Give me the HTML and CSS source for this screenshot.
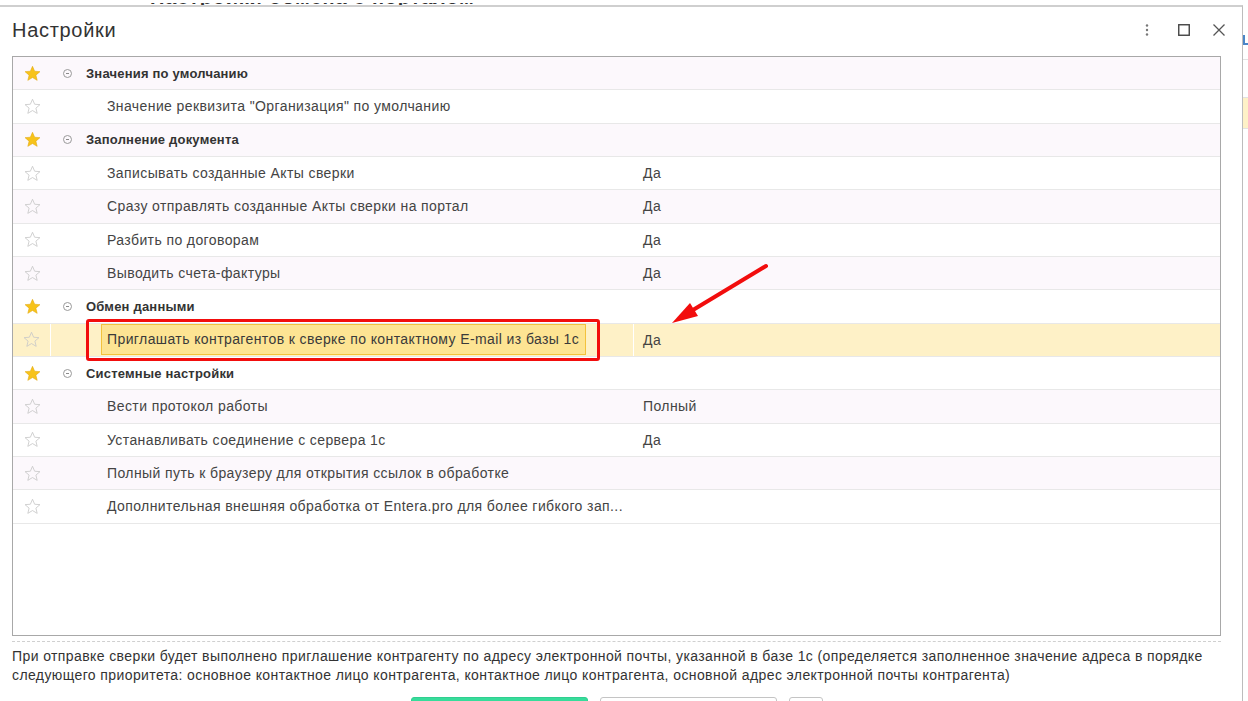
FILE: index.html
```html
<!DOCTYPE html>
<html lang="ru">
<head>
    <meta charset="UTF-8">
    <meta name="viewport" content="width=device-width, initial-scale=1.0">
    <title>Настройки</title>
    <link rel="stylesheet" href="styles.css">
</head>
<body>

<div class="screen">
    <div class="main">
        <!-- kusok okna pod dialogom -->
        <div class="backdrop-top"><div class="backdrop-clip"><span>Настройки обмена с порталом</span></div></div>

        <div class="dialog">
            <div class="dialog-header">
                <h1>Настройки</h1>
                <div class="header-tools">
                    <svg class="tool-dots" width="4" height="12" viewBox="0 0 4 12"><circle cx="2" cy="1.5" r="1.2"/><circle cx="2" cy="6" r="1.2"/><circle cx="2" cy="10.5" r="1.2"/></svg>
                    <svg class="tool-max" width="12" height="12" viewBox="0 0 12 12"><rect x="0.75" y="0.75" width="10.5" height="10.5"/></svg>
                    <svg class="tool-close" width="12" height="12" viewBox="0 0 12 12"><path d="M0.5 0.5L11.5 11.5M11.5 0.5L0.5 11.5"/></svg>
                </div>
            </div>

            <div class="settings-table">
                <div class="row group">
                    <div class="cell star"><svg class="star-on" width="17" height="17" viewBox="0 0 24 24"><path d="M12 1.8l3 7 7.5.6-5.7 4.9 1.8 7.4L12 17.7l-6.6 4 1.8-7.4L1.5 9.4 9 8.8z"/></svg></div>
                    <div class="cell label"><span class="collapse"></span>Значения по умолчанию</div>
                    <div class="cell value"></div>
                </div>
                <div class="row">
                    <div class="cell star"><svg class="star-off" width="17" height="17" viewBox="0 0 24 24"><path d="M12 1.8l3 7 7.5.6-5.7 4.9 1.8 7.4L12 17.7l-6.6 4 1.8-7.4L1.5 9.4 9 8.8z"/></svg></div>
                    <div class="cell label">Значение реквизита "Организация" по умолчанию</div>
                    <div class="cell value"></div>
                </div>
                <div class="row group">
                    <div class="cell star"><svg class="star-on" width="17" height="17" viewBox="0 0 24 24"><path d="M12 1.8l3 7 7.5.6-5.7 4.9 1.8 7.4L12 17.7l-6.6 4 1.8-7.4L1.5 9.4 9 8.8z"/></svg></div>
                    <div class="cell label"><span class="collapse"></span>Заполнение документа</div>
                    <div class="cell value"></div>
                </div>
                <div class="row">
                    <div class="cell star"><svg class="star-off" width="17" height="17" viewBox="0 0 24 24"><path d="M12 1.8l3 7 7.5.6-5.7 4.9 1.8 7.4L12 17.7l-6.6 4 1.8-7.4L1.5 9.4 9 8.8z"/></svg></div>
                    <div class="cell label">Записывать созданные Акты сверки</div>
                    <div class="cell value">Да</div>
                </div>
                <div class="row">
                    <div class="cell star"><svg class="star-off" width="17" height="17" viewBox="0 0 24 24"><path d="M12 1.8l3 7 7.5.6-5.7 4.9 1.8 7.4L12 17.7l-6.6 4 1.8-7.4L1.5 9.4 9 8.8z"/></svg></div>
                    <div class="cell label">Сразу отправлять созданные Акты сверки на портал</div>
                    <div class="cell value">Да</div>
                </div>
                <div class="row">
                    <div class="cell star"><svg class="star-off" width="17" height="17" viewBox="0 0 24 24"><path d="M12 1.8l3 7 7.5.6-5.7 4.9 1.8 7.4L12 17.7l-6.6 4 1.8-7.4L1.5 9.4 9 8.8z"/></svg></div>
                    <div class="cell label">Разбить по договорам</div>
                    <div class="cell value">Да</div>
                </div>
                <div class="row">
                    <div class="cell star"><svg class="star-off" width="17" height="17" viewBox="0 0 24 24"><path d="M12 1.8l3 7 7.5.6-5.7 4.9 1.8 7.4L12 17.7l-6.6 4 1.8-7.4L1.5 9.4 9 8.8z"/></svg></div>
                    <div class="cell label">Выводить счета-фактуры</div>
                    <div class="cell value">Да</div>
                </div>
                <div class="row group">
                    <div class="cell star"><svg class="star-on" width="17" height="17" viewBox="0 0 24 24"><path d="M12 1.8l3 7 7.5.6-5.7 4.9 1.8 7.4L12 17.7l-6.6 4 1.8-7.4L1.5 9.4 9 8.8z"/></svg></div>
                    <div class="cell label"><span class="collapse"></span>Обмен данными</div>
                    <div class="cell value"></div>
                </div>
                <div class="row selected">
                    <div class="cell star"><svg class="star-off" width="17" height="17" viewBox="0 0 24 24"><path d="M12 1.8l3 7 7.5.6-5.7 4.9 1.8 7.4L12 17.7l-6.6 4 1.8-7.4L1.5 9.4 9 8.8z"/></svg></div>
                    <div class="cell label">
                        <span class="edit-box">Приглашать контрагентов к сверке по контактному E-mail из базы 1с</span>
                        <span class="red-frame"></span>
                    </div>
                    <div class="cell value">Да</div>
                </div>
                <div class="row group">
                    <div class="cell star"><svg class="star-on" width="17" height="17" viewBox="0 0 24 24"><path d="M12 1.8l3 7 7.5.6-5.7 4.9 1.8 7.4L12 17.7l-6.6 4 1.8-7.4L1.5 9.4 9 8.8z"/></svg></div>
                    <div class="cell label"><span class="collapse"></span>Системные настройки</div>
                    <div class="cell value"></div>
                </div>
                <div class="row">
                    <div class="cell star"><svg class="star-off" width="17" height="17" viewBox="0 0 24 24"><path d="M12 1.8l3 7 7.5.6-5.7 4.9 1.8 7.4L12 17.7l-6.6 4 1.8-7.4L1.5 9.4 9 8.8z"/></svg></div>
                    <div class="cell label">Вести протокол работы</div>
                    <div class="cell value">Полный</div>
                </div>
                <div class="row">
                    <div class="cell star"><svg class="star-off" width="17" height="17" viewBox="0 0 24 24"><path d="M12 1.8l3 7 7.5.6-5.7 4.9 1.8 7.4L12 17.7l-6.6 4 1.8-7.4L1.5 9.4 9 8.8z"/></svg></div>
                    <div class="cell label">Устанавливать соединение с сервера 1с</div>
                    <div class="cell value">Да</div>
                </div>
                <div class="row">
                    <div class="cell star"><svg class="star-off" width="17" height="17" viewBox="0 0 24 24"><path d="M12 1.8l3 7 7.5.6-5.7 4.9 1.8 7.4L12 17.7l-6.6 4 1.8-7.4L1.5 9.4 9 8.8z"/></svg></div>
                    <div class="cell label">Полный путь к браузеру для открытия ссылок в обработке</div>
                    <div class="cell value"></div>
                </div>
                <div class="row">
                    <div class="cell star"><svg class="star-off" width="17" height="17" viewBox="0 0 24 24"><path d="M12 1.8l3 7 7.5.6-5.7 4.9 1.8 7.4L12 17.7l-6.6 4 1.8-7.4L1.5 9.4 9 8.8z"/></svg></div>
                    <div class="cell label">Дополнительная внешняя обработка от Entera.pro для более гибкого зап...</div>
                    <div class="cell value"></div>
                </div>
            </div>

            <div class="hint">
                При отправке сверки будет выполнено приглашение контрагенту по адресу электронной почты, указанной в базе 1с (определяется заполненное значение адреса в порядке<br>
                следующего приоритета: основное контактное лицо контрагента, контактное лицо контрагента, основной адрес электронной почты контрагента)
            </div>

            <div class="buttons">
                <button type="button" class="btn btn-primary">Записать и закрыть</button>
                <button type="button" class="btn">Записать</button>
                <button type="button" class="btn btn-small">?</button>
            </div>
        </div>
    </div>

    <div class="side">
        <div class="side-icon"></div>
        <div class="side-row side-first"></div>
        <div class="side-row side-yellow"></div>
        <div class="side-row"></div>
    </div>
</div>

<!-- strelka-podskazka poverh vsego -->
<svg class="arrow" width="1248" height="701" viewBox="0 0 1248 701">
    <line x1="766" y1="266" x2="688" y2="313"/>
    <polygon points="672,323 698,316 690,303"/>
</svg>

</body>
</html>
```

FILE: styles.css
```css
body {
    margin: 0;
    padding: 0;
    font-family: 'Liberation Sans', Arial, sans-serif;
    font-size: 14px;
    letter-spacing: 0.4px;
    color: #444;
    background-color: #fff;
    position: relative;
    width: 1248px;
    height: 701px;
    overflow: hidden;
}
.screen {
    display: flex;
    height: 701px;
}
.main {
    width: 1243px;
    display: flex;
    flex-direction: column;
    min-height: 0;
}
.backdrop-top {
    height: 5px;
    flex-shrink: 0;
    box-sizing: border-box;
    padding: 3px 0 0 150px;
    overflow: hidden;
}
.backdrop-clip {
    height: 2px;
    overflow: hidden;
}
.backdrop-clip span {
    display: block;
    margin-top: -16px;
    font-size: 20px;
    line-height: 20px;
    font-weight: bold;
    letter-spacing: 0.8px;
    color: #333;
    white-space: nowrap;
}
.dialog {
    flex: 1;
    min-height: 0;
    overflow: hidden;
    background-color: #fff;
    border-top: 2px solid #cfcfcf;
    border-right: 1px solid #bcbcbc;
    display: flex;
    flex-direction: column;
}
.dialog > * {
    flex-shrink: 0;
}
.dialog-header {
    height: 49px;
    box-sizing: border-box;
    padding: 12px 17px 0 12px;
    display: flex;
    justify-content: space-between;
    align-items: flex-start;
}
.dialog-header h1 {
    margin: 0;
    font-size: 20px;
    line-height: 23px;
    letter-spacing: 0.7px;
    font-weight: normal;
    color: #333;
}
.header-tools {
    display: flex;
    align-items: center;
    padding-top: 5px;
}
.tool-dots {
    fill: #777;
    margin-right: 29px;
}
.tool-max {
    fill: none;
    stroke: #444;
    stroke-width: 1.4;
    margin-right: 23px;
}
.tool-close {
    stroke: #555;
    stroke-width: 1.3;
}
.settings-table {
    margin: 0 21px 0 12px;
    height: 580px;
    box-sizing: border-box;
    border: 1px solid #a8a8a8;
    position: relative;
}
.row {
    display: grid;
    grid-template-columns: 38px 583px 1fr;
    height: 33.33px;
    box-sizing: border-box;
    border-bottom: 1px solid #e8e8e8;
}
.row:nth-child(odd) {
    background-color: #fcf8fc;
}
.row.selected {
    background-color: #fef1c7;
}
.cell {
    display: flex;
    align-items: center;
    white-space: nowrap;
}
.selected .cell {
    border-right: 1px solid #fff;
}
.cell.star {
    justify-content: center;
}
.star-on path {
    fill: #f7c31a;
    stroke: #e2a90c;
    stroke-width: 0.8;
}
.star-off path {
    fill: none;
    stroke: #c9c9c9;
    stroke-width: 1.2;
}
.cell.label {
    padding-left: 56px;
    position: relative;
}
.cell.value {
    padding-left: 9px;
}
.selected .cell.value {
    border-right: none;
}
.group .cell.label {
    padding-left: 12px;
    font-weight: bold;
    font-size: 13px;
    letter-spacing: 0.2px;
    color: #333;
}
.collapse {
    width: 7px;
    height: 7px;
    border: 1px solid #9a9a9a;
    border-radius: 50%;
    margin-right: 14px;
    position: relative;
}
.collapse::after {
    content: "";
    position: absolute;
    left: 2px;
    right: 2px;
    top: 3px;
    height: 1px;
    background-color: #8a8a8a;
}
.selected .cell.label {
    padding-left: 50px;
}
.edit-box {
    height: 31px;
    box-sizing: border-box;
    line-height: 29px;
    padding: 0 6px 0 5px;
    border: 1px solid #f3c23c;
    background-color: #fde493;
    color: #3a3a3a;
}
.red-frame {
    position: absolute;
    left: 35px;
    top: -5px;
    width: 514px;
    height: 42px;
    box-sizing: border-box;
    border: 3px solid #f20d0d;
    border-radius: 3px;
}
.hint {
    margin: 5px 21px 0 12px;
    padding-top: 5px;
    border-top: 1px dashed #d0d0d0;
    line-height: 19px;
    color: #333;
    white-space: nowrap;
}
.buttons {
    display: flex;
    gap: 12px;
    padding-left: 411px;
    margin-top: 12px;
}
.btn {
    width: 177px;
    height: 30px;
    border: 1px solid #c4c4c4;
    border-radius: 3px;
    background-color: #fff;
    font-family: 'Liberation Sans', Arial, sans-serif;
    font-size: 14px;
    color: #333;
}
.btn-primary {
    background-color: #37dc9b;
    border-color: #30cf90;
    color: #fff;
}
.btn-small {
    width: 34px;
}
.side {
    width: 5px;
    background-color: #fff;
}
.side-icon {
    height: 8px;
    margin-top: 35px;
    border-left: 2px solid #4a86c8;
    border-bottom: 2px solid #4a86c8;
    width: 3px;
}
.side-row {
    height: 30px;
    border-top: 1px solid #e2e2e2;
}
.side-first {
    margin-top: 14px;
    height: 37px;
}
.side-yellow {
    background-color: #fef1c7;
}
.arrow {
    position: absolute;
    left: 0;
    top: 0;
    pointer-events: none;
}
.arrow line {
    stroke: #f20d0d;
    stroke-width: 4;
    stroke-linecap: round;
}
.arrow polygon {
    fill: #f20d0d;
}
```
